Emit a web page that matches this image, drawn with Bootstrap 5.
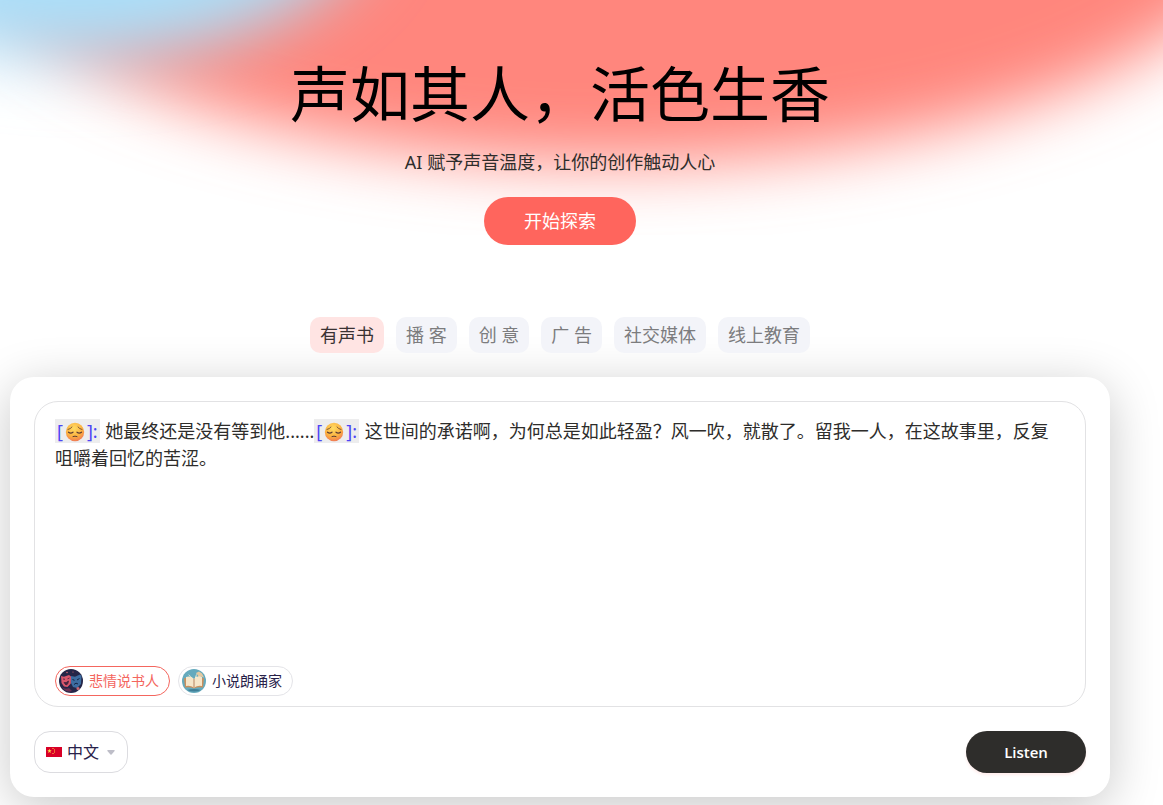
<!DOCTYPE html>
<html lang="zh-CN">
<head>
<meta charset="utf-8">
<meta name="viewport" content="width=device-width, initial-scale=1">
<title>声如其人，活色生香</title>
<link rel="stylesheet" href="https://cdn.jsdelivr.net/npm/bootstrap@5.3.0/dist/css/bootstrap.min.css">
<style>
  body { font-family: "Noto Sans", "Noto Sans CJK SC", sans-serif; background: #fff; color: #2e2d2b; overflow-x: hidden; }
  .glow { position: absolute; inset: 0 0 auto 0; width: 100%; height: 235px; z-index: -1; }
  .page { max-width: 1120px; padding: 56px 10px 8px; }
  .headline { font-size: 60px; line-height: 76px; font-weight: 400; color: #000; margin: 0 0 16px; }
  .tagline { font-size: 18px; line-height: 28px; margin: 0 0 21px; }
  .btn-explore { --bs-btn-color: #fff; --bs-btn-bg: #ff655d; --bs-btn-hover-color: #fff; --bs-btn-hover-bg: #f0554d; --bs-btn-border-width: 0; font-size: 18px; line-height: 28px; padding: 10px 40px; }
  .topics { gap: 12px; margin-top: 72px; margin-bottom: 24px; }
  .topic { --bs-btn-color: #7c7c7e; --bs-btn-bg: #f3f4f9; --bs-btn-hover-bg: #e9ebf3; --bs-btn-border-width: 0; --bs-btn-active-bg: #ffe4e3; --bs-btn-active-color: #3a3233; font-size: 18px; line-height: 28px; padding: 4px 10px; border-radius: 10px; }
  .studio { border-radius: 24px; padding: 24px; background: #fff; box-shadow: 0 10px 50px rgba(0, 0, 0, .22); }
  .editor { border: 1px solid #e2e2e4; border-radius: 24px; min-height: 306px; padding: 16px 32px 10px 20px; margin-bottom: 24px; }
  .script-text { font-size: 18px; line-height: 27px; outline: 0; }
  .mood { color: #4d45f5; background: #ededee; padding: 0 2px; margin-right: 1px; }
  .mood svg { width: 20px; height: 20px; vertical-align: -4px; margin: 0 2px; }
  .voice { --bs-btn-color: #282149; --bs-btn-border-color: #e4e4e8; --bs-btn-active-bg: #fff; --bs-btn-active-color: #f4665e; --bs-btn-active-border-color: #f4665e; font-size: 14px; line-height: 20px; padding: 2px 10px 2px 3px; gap: 6px; }
  .voice svg { width: 24px; height: 24px; }
  .lang-box { position: relative; }
  .lang-box svg { position: absolute; left: 12px; pointer-events: none; }
  .lang-select { width: 94px; height: 42px; border-color: #dcdce0; border-radius: 16px; color: #282149; font-size: 16px; padding: 0 28px 0 32px;
    background-image: url("data:image/svg+xml,%3csvg xmlns='http://www.w3.org/2000/svg' viewBox='0 0 10 6'%3e%3cpath fill='%23bebec8' d='M1 0h8q1 0 .5 1L5.700 5.500q-.7.500-1.400 0L.5 1Q0 0 1 0z'/%3e%3c/svg%3e"); background-size: 8px 5px; background-position: right 12px center; }
  .btn-listen { --bs-btn-color: #fff; --bs-btn-bg: #2e2d2b; --bs-btn-hover-color: #fff; --bs-btn-hover-bg: #444; --bs-btn-border-width: 0; width: 120px; height: 42px; font: 600 15px "Open Sans", "Noto Sans", sans-serif; box-shadow: 0 2px 3px rgba(255, 101, 93, .12); }
</style>
</head>
<body>
<svg class="glow" viewBox="0 0 1163 235" preserveAspectRatio="none" aria-hidden="true">
  <defs>
    <filter id="soft" filterUnits="userSpaceOnUse" x="-400" y="-600" width="2000" height="1000"><feGaussianBlur stdDeviation="33"/></filter>
    <radialGradient id="skin" cx=".45" cy=".3" r=".75"><stop offset="0" stop-color="#ffdc63"/><stop offset=".6" stop-color="#fcb140"/><stop offset="1" stop-color="#ee7157"/></radialGradient>
  </defs>
  <ellipse cx="610" cy="-100" rx="658" ry="263" fill="#ff867d" filter="url(#soft)"/>
  <ellipse cx="80" cy="-110" rx="300" ry="170" fill="#abdff9" filter="url(#soft)"/>
</svg>
<main class="page">
  <header class="text-center">
    <h1 class="headline">声如其人，活色生香</h1>
    <p class="tagline">AI 赋予声音温度，让你的创作触动人心</p>
    <button type="button" class="btn btn-explore rounded-pill">开始探索</button>
  </header>

  <nav class="topics d-flex flex-wrap justify-content-center" aria-label="场景">
    <button type="button" class="btn topic active">有声书</button>
    <button type="button" class="btn topic">播 客</button>
    <button type="button" class="btn topic">创 意</button>
    <button type="button" class="btn topic">广 告</button>
    <button type="button" class="btn topic">社交媒体</button>
    <button type="button" class="btn topic">线上教育</button>
  </nav>

  <section class="studio">
    <div class="editor d-flex flex-column justify-content-between">
      <div class="script-text" contenteditable="true" role="textbox" aria-multiline="true" aria-label="文本" spellcheck="false"><span class="mood">[<svg viewBox="0 0 20 20"><circle cx="10" cy="10" r="9.200" fill="url(#skin)"/><g fill="none" stroke="#5b3b34" stroke-linecap="round"><path d="M3 7.500Q5.500 7 7 5M13 5q1.500 2 4 2.500" stroke-width=".8"/><path d="M3.500 10.200q2.200 1.800 4.500 0M12 10.200q2.200 1.800 4.500 0" stroke-width="1.200"/><path d="M8 14.500q2-.8 4 0" stroke-width="1"/></g></svg>]:</span> 她最终还是没有等到他......<span class="mood">[<svg viewBox="0 0 20 20"><circle cx="10" cy="10" r="9.200" fill="url(#skin)"/><g fill="none" stroke="#5b3b34" stroke-linecap="round"><path d="M3 7.500Q5.500 7 7 5M13 5q1.500 2 4 2.500" stroke-width=".8"/><path d="M3.500 10.200q2.200 1.800 4.500 0M12 10.200q2.200 1.800 4.500 0" stroke-width="1.200"/><path d="M8 14.500q2-.8 4 0" stroke-width="1"/></g></svg>]:</span> 这世间的承诺啊，为何总是如此轻盈？风一吹，就散了。留我一人，在这故事里，反复咀嚼着回忆的苦涩。</div>
      <div class="d-flex flex-wrap gap-2">
        <button type="button" class="btn voice active rounded-pill d-flex align-items-center">
          <svg viewBox="0 0 24 24" aria-hidden="true"><circle cx="12" cy="12" r="12" fill="#252648"/><path d="M2 7l3 .8 5-1.800 2 1.500-.2 7L8.500 18 5 17.500 2.500 14z" fill="#d9566c"/><path d="M4 10l2 .3M8.500 9.800l2-.8M5 13.500q2 1 4.500-1.500-.5 4-2.500 4z" stroke="#4c2540" fill="#4c2540" stroke-width=".9"/><path d="M12 7l4 .8 5-2.300 1.500 1.500-.5 8-4 4-4-1-2-4z" fill="#3d6da1"/><path d="M13.500 10.500l2 .8M18 11l2.500-1.500M15 15.500q2-2.500 4-.5" stroke="#142344" fill="none"/><g fill="#cf6672"><circle cx="8" cy="3.500" r=".8"/><circle cx="14" cy="3" r=".6"/><circle cx="19" cy="19.500" r="1.500"/></g><path d="M3 18q3 3 7 1l3 3q-6 2-10-4z" fill="#6d3052"/></svg>
          悲情说书人</button>
        <button type="button" class="btn voice rounded-pill d-flex align-items-center">
          <svg viewBox="0 0 24 24" aria-hidden="true"><circle cx="12" cy="12" r="12" fill="#65aabd"/><path d="M14 4l3-1.500 3 2 2 4-3-1-2 1.500-1-2.500z" fill="#e6c9a0"/><path d="M2 9l1 9.500q5-1 9 1 4-2 9-1L22 9l-3 .5-7 3-7-3z" fill="#c9905e"/><path d="M4 8q5-1.500 8 2 3-4 8-2v9q-4-1-8 1.500-4-2.500-8-1.500z" fill="#f6e6c9"/><path d="M12 10v8" stroke="#b68360"/><path d="M6 5q2 1 4 4-3-2-4-4M13 9l1.500-5v5z" fill="#fff2d4"/><path d="M5 21q7-2 14 0-7 3-14 0z" fill="#407f98"/></svg>
          小说朗诵家</button>
      </div>
    </div>
    <div class="d-flex justify-content-between align-items-center">
      <div class="lang-box d-flex align-items-center">
        <select class="form-select lang-select" aria-label="语言"><option selected>中文</option><option>English</option></select>
        <svg width="16" height="10" viewBox="0 0 16 10" aria-hidden="true"><path fill="#d80027" d="M0 0h16v10H0z"/><path fill="#ffda44" d="M3.500 1.800l.6 1.500h1.600l-1.300 1 .5 1.600-1.400-1-1.400 1 .5-1.600-1.300-1h1.600zM6.500 1h1v1h-1zM8 2.500h1v1H8zM8 4.500h1v1H8zM6.500 6h1v1h-1z"/></svg>
      </div>
      <button type="button" class="btn btn-listen rounded-pill">Listen</button>
    </div>
  </section>
</main>
<script src="https://cdn.jsdelivr.net/npm/bootstrap@5.3.0/dist/js/bootstrap.bundle.min.js"></script>
</body>
</html>
